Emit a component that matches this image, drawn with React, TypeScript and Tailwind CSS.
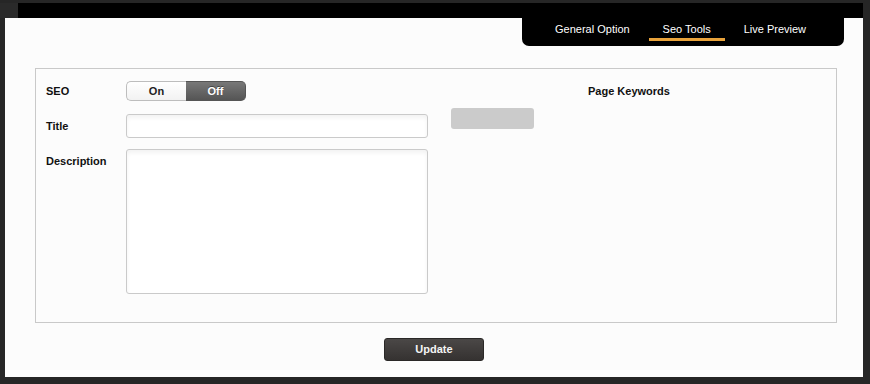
import React from "react";

export default function App() {
  const font = { fontFamily: '"Liberation Sans", Arial, sans-serif' };
  return (
    <div
      className="w-[870px] h-[384px] bg-[#262626] pt-[3px] pl-[5px] pr-[7px] pb-[7px] flex flex-col overflow-hidden"
      style={font}
    >
      {/* black header strip */}
      <div className="h-[15px] bg-black -ml-[5px] flex">
        <div className="w-[18px] h-[15px] bg-[#2a2a2a]" />
      </div>

      {/* white content */}
      <div className="bg-[#fcfcfc] h-[359px] flex flex-col">
        {/* tab panel */}
        <div className="flex justify-end pr-[19px]">
          <div className="bg-black rounded-b-[7px] flex pl-[19px] pr-[24px] pt-[4px] pb-[5px] gap-[5px]">
            <div className="px-[14px] flex flex-col items-center">
              <span className="text-white text-[11px] leading-[14px]">General Option</span>
              <div className="h-[3px] mt-[2px] w-full" />
            </div>
            <div className="w-[76px] flex flex-col items-center">
              <span className="text-white text-[11px] leading-[14px]">Seo Tools</span>
              <div className="h-[3px] mt-[2px] w-full bg-[#e9a33b]" />
            </div>
            <div className="px-[14px] flex flex-col items-center">
              <span className="text-white text-[11px] leading-[14px]">Live Preview</span>
              <div className="h-[3px] mt-[2px] w-full" />
            </div>
          </div>
        </div>

        {/* settings box */}
        <div className="mt-[22px] ml-[30px] mr-[26px] h-[255px] border border-[#c9c9c9] bg-[#fcfcfc] flex pl-[10px] pt-[12px]">
          <div className="flex flex-col w-[382px]">
            <div className="flex items-center h-[20px]">
              <span className="w-[80px] text-[11px] font-bold text-[#111]">SEO</span>
              <div className="flex h-[20px] w-[120px] text-[11px] font-bold">
                <div className="w-[60px] flex items-center justify-center bg-gradient-to-b from-white to-[#f2f2f2] border border-r-0 border-[#bdbdbd] rounded-l-[5px] text-[#222]">
                  On
                </div>
                <div className="w-[60px] flex items-center justify-center bg-gradient-to-b from-[#787878] to-[#555] border border-l-0 border-[#555] rounded-r-[5px] text-white [text-shadow:0_-1px_0_rgba(0,0,0,0.4)]">
                  Off
                </div>
              </div>
            </div>
            <div className="flex items-center mt-[13px]">
              <span className="w-[80px] text-[11px] font-bold text-[#111]">Title</span>
              <div className="w-[302px] h-[24px] bg-white border border-[#cacaca] rounded-[3px] shadow-[inset_0_3px_4px_rgba(0,0,0,0.05)]" />
            </div>
            <div className="flex items-start mt-[11px]">
              <span className="w-[80px] text-[11px] font-bold text-[#111] pt-[5px] leading-[14px]">Description</span>
              <div className="w-[302px] h-[145px] bg-white border border-[#cacaca] rounded-[3px] shadow-[inset_0_3px_4px_rgba(0,0,0,0.05)]" />
            </div>
          </div>
          <div className="flex flex-col ml-[23px]">
            <span className="pl-[137px] mt-[3px] text-[11px] leading-[14px] font-bold text-[#111]">Page Keywords</span>
            <div className="mt-[10px] w-[83px] h-[21px] bg-[#cbcbcb] rounded-[3px]" />
          </div>
        </div>

        {/* update button */}
        <div className="flex justify-center mt-[15px]">
          <button className="w-[100px] h-[23px] rounded-[3px] border border-[#2a2827] bg-gradient-to-b from-[#4b4847] to-[#353231] text-[#f4f4f4] text-[11px] font-bold">
            Update
          </button>
        </div>
      </div>
    </div>
  );
}
